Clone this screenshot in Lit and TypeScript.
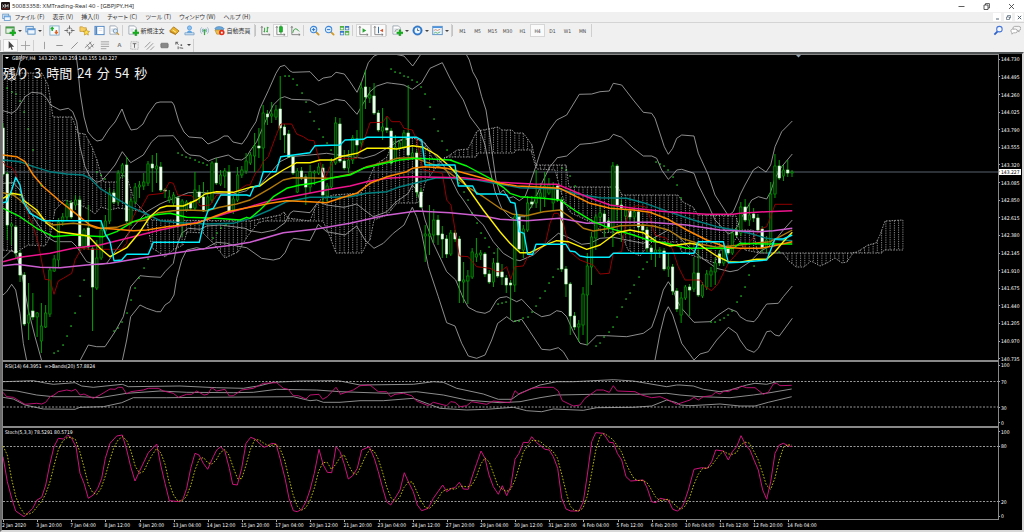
import { LitElement, html, svg, css, nothing } from "lit";
import { customElement, state } from "lit/decorators.js";
import { classMap } from "lit/directives/class-map.js";
import { styleMap } from "lit/directives/style-map.js";

type Point = [number, number];
type Tile = [number, number, string];

const FIRST_BAR = 3;
const BAR_STEP = 4.265;
const BAR_COUNT = 186;
const barX = (i: number) => FIRST_BAR + i * BAR_STEP;

/* Each tile holds an origin and points stored in thirds of a unit from it. */
const trace = (...tiles: Tile[]): Point[] =>
  tiles.flatMap(([ox, oy, text]) =>
    text
      .trim()
      .split(/\s+/)
      .map((pair) => {
        const [x, y] = pair.split(",").map(Number);
        return [ox + x / 3, oy + y / 3] as Point;
      })
  );

const points = (text: string): Point[] =>
  text.trim().split(/\s+/).map((pair) => pair.split(",").map(Number) as Point);

const join = (line: Point[]) =>
  line.map(([x, y]) => `${x.toFixed(1)},${y.toFixed(1)}`).join(" ");

const valueAt = (line: Point[], x: number): number => {
  if (x <= line[0][0]) return line[0][1];
  for (let i = 1; i < line.length; i++) {
    const [x0, y0] = line[i - 1];
    const [x1, y1] = line[i];
    if (x <= x1) return x1 === x0 ? y1 : y0 + ((y1 - y0) * (x - x0)) / (x1 - x0);
  }
  return line[line.length - 1][1];
};

/* Bollinger bands */
const BANDS: Point[][] = [
  points("3,72 8,79 12,81 16,76 19,66 22,54"),
  [
    ...points(
      "76,54 78,70 80,92 84,117 88,132 93,138 97,141 102,140 109,129 115,122 122,109 126,120 131,130 137,129 143,124 148,114 156,103 160,102 172,102 174,105 179,122 184,132 189,137 202,138 208,144 213,142 218,140 224,136 228,136 233,142 242,144 247,137"
    ),
    ...trace([250, 50, "0,243 18,215 30,175 55,122 78,70 90,50 104,46 120,63 128,67 180,65 206,93 220,84 244,80 258,67 283,72 300,95 321,127 335,95 355,38 372,18 387,12"]),
  ],
  trace([250, 50, "432,12 462,18 488,48 513,12"]),
  [
    ...trace([250, 50, "648,12 658,30 668,65 682,90 695,140 708,180 718,245 728,320 738,390 750,430"]),
    ...trace([500, 50, "10,420 25,445 40,440 58,452 75,440 85,415 109,345 120,310 145,245 170,210 200,195 238,133 275,132 300,125 328,123 340,100 365,105 400,150 430,187 455,190 465,205 493,290 505,313 518,295 530,265 545,255 582,258 595,310 625,375 645,435 685,497 700,485 715,450"]),
    ...trace([740, 50, "0,435 15,405 40,360 55,350 78,366 92,345 105,290 125,245 157,213"]),
  ],
  trace(
    [0, 50, "9,182 35,190 50,180 75,140 95,127 125,130 140,145 152,165 180,180 205,175 218,185 230,215 240,290 255,350 270,380 290,397 305,392 325,370 345,345 367,305 392,338 430,315 455,275 475,258 520,257 535,275 555,305 570,315 600,318 625,333 645,325 685,315 705,328 725,330 740,320"],
    [250, 50, "0,303 20,275 35,240 50,205 70,165 90,145 104,140 125,148 180,150 206,165 230,158 257,148 285,152 321,193 340,160 360,125 380,108 411,98 425,100 450,103 462,105 487,118 515,98 540,55 577,38 600,85 620,120 640,150 660,200 690,240 705,285 718,350 735,425"],
    [500, 50, "5,475 30,502 45,508 58,500 75,500 100,460 130,390 150,350 172,323 200,318 240,283 275,280 300,275 328,268 340,253 365,262 400,295 430,318 455,318 470,325 485,360 505,388 518,375 530,360 545,358 582,370 595,405 625,465 645,510 685,552 700,545 715,525"],
    [740, 50, "0,510 15,485 35,450 55,440 80,447 92,425 105,385 125,350 157,312"]
  ),
  trace(
    [0, 50, "9,400 40,398 60,420 80,465"],
    [0, 200, "105,60 140,110 165,125 215,125 230,140 260,185 290,195 320,190 345,155 400,80 440,35 480,12"],
    [0, 50, "495,455 530,442 565,428 600,427 640,430 700,432 740,422"],
    [250, 50, "0,412 30,405 60,370 90,335 120,320 180,315 230,310 250,313 300,320 340,325 375,315 411,295 450,270 490,262 520,275 550,310 580,345 600,380 625,430"],
    [250, 200, "640,0 670,45 700,75 730,125"],
    [500, 50, "10,610 40,628 60,632 100,615 140,580 175,550 200,560 245,583 270,580 300,565 340,562 380,570 430,580 460,565 505,540 530,555 560,585 600,620 650,655 690,665 715,660"],
    [740, 50, "0,655 30,635 60,605 85,590 110,565 130,540 157,510"]
  ),
  trace([0, 200, "9,175 35,150 50,165 65,220 85,330 105,410 125,482"]),
  trace(
    [0, 200, "240,482 265,435 290,440 315,440 345,395 370,350 392,260 420,227 450,230 482,232 495,215 520,190 530,140 545,100 565,85 600,88 620,78 660,75 700,80 735,85"],
    [250, 200, "0,92 35,98 75,90 105,68 120,40 130,33 180,38 205,5 230,15 282,22 320,12 340,28 370,50 411,35 435,8 475,-20 487,-45 500,-30 515,20 525,60 550,130 590,215 617,240 640,295 655,322 680,335 705,340 720,333 740,300"],
    [500, 50, "0,743 20,740 50,755 65,748 100,785 125,800 150,795 170,782 185,785 200,800 220,845 240,880 262,885 290,857 320,857 380,860 430,850 455,832 470,790 490,720 505,695 518,715 530,750 545,775 582,817 630,815 655,795 685,775 710,785"],
    [740, 50, "0,800 20,812 42,815 55,800 67,780 80,762 115,760 130,740 157,708"]
  ),
  trace([0, 200, "9,285 20,275 35,253 47,270 60,340 70,430 80,482"]),
  trace(
    [0, 200, "367,482 380,420 392,350 420,315 440,325 470,335 482,335 495,315 510,305 522,285 530,235 545,180 560,150 590,143 610,148 650,127 680,130 710,138 740,143"],
    [250, 200, "0,150 35,175 70,180 90,175 105,158 120,125 130,115 180,122 205,73 230,95 285,105 320,78 345,120 372,145 400,130 430,100 462,75 487,22 500,50 515,100 535,200 565,290 590,368 615,378 635,430 655,468 680,475 705,465 725,420 743,370"],
    [500, 50, "0,815 20,800 40,815 65,808 90,845 125,898 150,900 175,893 190,905 205,930"]
  ),
  trace(
    [500, 50, "465,930 480,850 495,790 505,770 518,795 545,880 582,930 600,912 625,905 650,870 685,832 710,850"],
    [740, 50, "0,870 20,898 42,907 55,895 80,845 92,843 105,855 118,858 157,805"]
  ),
];

const AVERAGES: { color: string; width: number; line: Point[] }[] = [
  {
    color: "#a40000",
    width: 0.9,
    line: trace(
      [0, 50, "9,335 20,350 35,352 47,370 60,410 70,440"],
      [0, 200, "75,20 100,80 115,130 135,238 150,240 162,283 175,243 190,235 215,220 225,180 245,145 270,148 365,148 380,130 390,70 410,30"],
      [0, 50, "420,480 445,435 490,430 508,397 520,400 533,435 575,437 600,468 630,465 650,435 690,435 740,405"],
      [250, 50, "0,405 15,372 30,355 40,335 55,320 75,265 92,222 125,222 140,252 160,260 175,270 192,272 205,320 225,385 240,350 257,325 321,325 335,290 360,218 398,217 411,198 425,215 450,215 462,235 487,240 500,270 510,320 520,360 577,370 590,450"],
      [250, 200, "603,15 628,168 655,170 680,200 720,205 740,215"],
      [500, 50, "0,665 20,650 32,688 45,650 70,648 83,620 135,585 150,520 162,490 175,490 190,520 210,605 240,630 280,645 300,672 328,670 340,610 365,605 375,530 390,475 410,467 435,470 445,485 465,555 500,565 518,600 535,650 555,690 600,690 615,710 635,722 655,700 685,640"],
      [740, 50, "0,600 30,575 65,535 80,530 92,500 105,463 157,463"]
    ),
  },
  {
    color: "#008080",
    width: 1.4,
    line: trace(
      [0, 50, "9,330 60,335 100,350 150,365 200,372 250,375 270,385 300,415 340,440"],
      [0, 200, "390,20 440,42 480,62 540,68 620,72 700,70"],
      [250, 50, "0,505 60,480 110,455 180,442 240,442 300,440 350,430 411,425 450,410 500,398 560,383 600,385 680,390"],
      [500, 50, "0,403 60,413 180,417 230,432 300,443 380,445 430,458 505,485 580,510 650,530"],
      [740, 50, "0,543 40,553 80,565 120,570 157,572"]
    ),
  },
  {
    color: "#b07a0c",
    width: 1.4,
    line: trace(
      [0, 50, "9,428 40,435 60,450"],
      [0, 200, "70,10 110,40 140,65 160,75 220,70 265,75 290,85 350,82 400,65 440,60 475,38 520,32 560,30 620,32 660,22 710,12"],
      [250, 50, "0,450 60,415 100,390 130,383 240,385 300,373 350,350 411,335 440,325 490,323 540,340 580,355 620,385 660,415 700,440"],
      [500, 50, "0,475 40,493 80,497 130,485 180,480 215,505 250,535 280,543 330,535 360,527 430,525 460,528 505,540 545,565 600,582 650,592"],
      [740, 50, "0,585 40,580 90,575 120,560 157,540"]
    ),
  },
  {
    color: "#cc5ed0",
    width: 1.5,
    line: trace(
      [0, 200, "9,197 50,193 120,202 180,203 260,195 330,190 420,175 520,160 600,148 700,135"],
      [250, 200, "0,127 100,98 200,87 300,70 400,47 500,33 600,38 700,48"],
      [500, 50, "0,508 80,512 180,505 260,520 340,517 450,517 560,525 660,540"],
      [740, 50, "0,543 60,545 100,542 157,535"]
    ),
  },
  {
    color: "#f0148e",
    width: 1.5,
    line: trace(
      [0, 200, "9,185 60,172 150,160 220,145 300,135 400,110 480,90 600,65 680,40"],
      [250, 50, "0,470 60,452 150,435 240,418 300,408 350,395 411,385 487,380 560,382 640,383"],
      [500, 50, "0,397 100,402 170,403 200,415 260,440 330,465 400,475 500,485 620,493 700,493"],
      [740, 50, "0,490 80,485 157,482"]
    ),
  },
  {
    color: "#00ff00",
    width: 1.4,
    line: trace(
      [0, 200, "9,25 60,50 110,85 160,110 220,105 310,110 350,95 400,65 460,45 510,40 560,52 650,55 720,60 740,52"],
      [250, 50, "0,505 30,480 70,440 110,415 150,405 190,400 240,385 300,375 340,355 411,338 450,330 500,325 600,330 650,348 720,385"],
      [500, 50, "10,412 30,430 60,440 130,445 180,450 230,485 280,515 330,535 400,555 450,572 500,580 560,595 620,595 700,595"],
      [740, 50, "0,580 80,582 157,582"]
    ),
  },
  {
    color: "#ff8800",
    width: 1.5,
    line: trace(
      [0, 50, "9,315 50,320 75,335 100,375 130,410 170,445"],
      [0, 200, "175,0 220,35 270,75 300,85 340,87 400,92 440,90 500,80 590,70 680,35"],
      [250, 50, "0,472 60,460 110,452 180,455 230,458 270,445 320,430 360,400 411,380 470,365 487,355 525,350 590,355 640,368 700,385"],
      [500, 50, "0,400 50,408 100,410 180,415 220,435 270,460 330,475 400,480 450,487 505,508 560,540 620,570 680,592"],
      [740, 50, "0,595 60,595 100,588 157,575"]
    ),
  },
  {
    color: "#fff200",
    width: 1.4,
    line: trace(
      [0, 50, "9,445 35,430 65,435"],
      [0, 200, "70,0 110,30 140,70 175,95 230,103 265,108 300,145 330,170 380,143 420,95 450,50 480,24"],
      [0, 50, "500,468 550,468 590,450 615,432 650,425 700,427 740,415"],
      [250, 50, "0,412 30,408 60,385 100,360 140,338 180,338 210,330 250,330 270,320 321,310 350,295 411,295 440,297 487,287 520,292 560,315 600,350 640,395 700,480"],
      [500, 50, "0,545 30,580 60,608 90,608 140,583 170,572 205,575 260,598 300,585 350,548 390,540 430,548 470,575 510,588 570,580 600,585 650,618 685,635"],
      [740, 50, "0,637 50,628 80,628 105,605 130,575 157,547"]
    ),
  },
  {
    color: "#00f0ff",
    width: 1.4,
    line: trace(
      [0, 50, "9,458 20,455 35,420 47,382 60,405 68,450"],
      [0, 200, "75,15 90,40 130,62 303,62 315,100 330,125 342,182 365,180 380,163 445,163 460,127 598,127 612,65 625,30 640,25"],
      [0, 50, "662,435 740,435"],
      [250, 50, "0,438 12,410 27,408 40,365 78,365 92,320 180,308 195,287 270,285 285,270 340,268 350,262 500,262 515,270 525,345 615,345 625,408 668,408 680,432"],
      [500, 50, "0,432 20,435 32,457 45,460 58,545 72,550 83,613 98,613 108,583 198,583 210,603 225,605 240,618 260,622 328,622 340,610 582,610 595,575 670,575 685,638"],
      [740, 50, "0,637 55,632 80,630 92,600 105,567 130,567 157,555"]
    ),
  },
];

/* Ichimoku cloud spans */
const SPAN_A = points(
  "3,75 12,77 20,73 42,73 48,85 53,117 72,117 78,133 85,134 92,147 97,160 101,175 104,182 118,182 122,175 127,177 132,193 136,203 145,212 152,220 250,221 280,215 284,212 288,218 310,221 315,208 320,200 333,195 361,193 367,183 375,165 387,157 393,142 413,138 425,143 432,158 440,162 447,157 457,150 468,149 477,131 483,130 498,127 502,130 512,130 515,133 523,133 527,138 532,145 536,165 566,165 569,187 618,187 622,195 678,195 683,202 693,207 698,215 736,216 740,230 753,230 757,250 760,253 850,253 857,252 868,245 876,243 880,235 885,221 903,220"
);
const SPAN_B = points(
  "3,250 17,252 28,245 45,246 50,237 55,210 65,200 80,205 90,210 95,214 101,207 110,210 118,208 132,210 145,212 152,248 160,253 165,257 173,250 183,245 187,232 203,233 213,243 225,258 238,252 247,237 258,223 264,221 323,221 330,237 336,253 362,253 367,243 370,240 374,220 387,215 397,203 417,203 421,200 425,183 432,173 438,165 445,157 476,157 478,153 514,153 516,150 531,150 535,165 537,169 555,170 562,195 566,205 571,213 580,217 592,223 603,233 613,232 622,235 628,250 640,256 647,247 652,242 677,242 682,252 700,258 715,263 720,250 728,250 737,237 745,250 760,253 783,253 788,260 796,267 804,267 811,261 820,266 827,263 835,258 842,263 847,262 853,253 882,253 884,250 903,250"
);

const SAR = points(
  "7,88 12,92 16,94 20,101 24,112 28,129 33,150 41,185 54,353 58,351 63,345 67,336 71,326 75,313 80,296 84,280 97,172 101,175 105,179 114,331 118,328 122,322 127,313 131,300 135,288 139,278 144,268 148,259 178,153 182,155 186,157 190,158 195,160 199,162 203,163 207,165 213,238 217,233 221,228 226,225 285,76 289,76 293,79 297,85 302,93 306,102 310,112 314,121 319,129 323,137 327,143 331,150 391,69 395,72 400,73 404,76 408,77 412,80 417,82 421,87 425,94 430,107 434,119 438,131 442,141 447,150 451,160 455,170 459,183 464,192 468,200 472,213 477,223 481,233 485,238 489,247 494,253 498,304 502,303 506,302 515,321 519,321 523,318 528,317 532,312 536,306 540,298 545,291 549,283 553,277 558,269 562,168 566,170 570,176 575,186 596,346 600,343 604,337 609,332 613,327 617,317 622,307 626,299 630,293 634,285 639,277 643,269 647,262 656,162 660,164 664,166 668,170 673,177 677,185 681,198 711,322 715,322 720,320 724,318 728,315 732,311 737,302 741,296 745,287 749,275 754,266 779,252"
);

/* One candle per bar: high, low, body top, body bottom; "-" marks a falling bar. */
const CANDLES = `
123,176,128,174- 172,240,174,225- 222,245,224,226 225,258,227,253- 250,282,253,275- 272,326,275,324- 283,340,315,323 293,320,311,317-
312,337,313,317 303,353,326,341 305,328,313,327 267,317,270,314 255,272,259,271 218,268,222,260 213,226,217,222 200,220,204,217
200,219,203,217- 195,210,200,205 196,250,200,246- 228,250,230,247 205,250,228,247- 246,331,249,287- 240,290,258,288 220,260,230,258
215,234,221,231 188,224,193,221 190,204,193,202- 170,205,173,202 163,178,165,173 157,223,165,221- 198,226,201,222 183,204,187,202
181,198,185,187 173,190,182,186 161,186,164,183 155,192,164,168- 153,183,166,169 162,192,167,190- 188,198,190,191- 190,203,197,200
192,206,195,203 196,228,198,226- 199,237,201,226 200,212,202,210 201,210,203,208- 172,210,190,208 185,203,192,197- 182,212,197,211-
190,212,197,211 161,203,163,200 158,185,163,183- 170,186,175,184 168,188,171,176 165,213,172,211- 196,214,199,211 167,202,175,200
166,178,170,175 153,174,161,171 152,165,155,163 133,172,146,156 128,158,146,148- 105,172,113,148 110,125,114,117- 102,123,114,116
105,120,110,117 76,140,109,128- 124,153,127,135- 130,158,134,157- 155,175,157,173- 168,193,171,192 167,180,171,178- 174,205,177,187-
165,193,172,187 170,185,172,173 163,175,167,173 164,202,168,195- 183,202,186,196 158,190,162,187 117,165,123,163 118,163,124,161-
150,170,161,168- 150,173,160,168 135,164,138,160 130,158,139,145- 82,147,88,143 70,109,87,97- 87,103,95,98 83,115,96,113-
110,132,113,130- 108,140,127,131 117,133,128,130- 128,165,131,163- 135,162,147,160 140,150,143,148 130,149,133,147 85,158,133,155-
148,160,153,157 150,197,153,192- 188,208,192,207- 225,262,234,236 205,255,234,236 209,243,220,235 215,245,220,235- 226,258,234,239-
235,258,239,254- 230,256,233,254 230,242,233,239- 236,303,239,281- 262,303,280,282 270,304,276,281 248,279,252,277 238,262,254,257
250,260,253,255 252,277,254,274- 270,284,274,282- 258,287,263,282 248,278,263,276- 264,285,272,277- 275,293,278,285- 280,320,283,285-
214,292,217,285 214,252,217,249- 225,258,229,250 196,232,203,230 196,208,202,204- 170,208,196,203 183,213,193,197 172,207,186,197
178,195,185,193 182,210,187,203 184,202,186,200- 197,272,200,269- 266,297,269,284- 282,335,284,316- 312,330,316,327- 320,342,324,327
287,335,294,325 253,345,266,295 232,285,237,267 214,250,217,238 206,225,213,217 210,237,214,222- 218,232,221,227- 162,247,166,227
164,220,166,205- 200,242,205,208- 208,220,210,216 208,220,211,217- 208,222,212,217 210,230,212,227- 222,234,226,230- 227,252,230,248-
245,260,248,252- 237,267,250,253 247,258,250,251 248,271,251,269- 253,277,267,269 264,295,267,291- 288,312,291,309- 292,323,298,315
285,300,287,298 284,316,287,290- 257,292,273,289 250,297,273,295- 282,298,285,296 270,290,274,287 267,287,271,275 258,285,263,272
250,266,254,263- 245,266,249,263 245,255,249,253- 228,255,233,253 227,237,230,235- 202,236,207,233 199,222,207,220- 203,226,215,220
208,222,214,218- 214,232,218,230- 226,253,229,248- 236,253,240,248 182,244,194,242 154,198,166,194 160,180,166,178- 165,181,170,176
160,177,170,173- 170,177,172,173
`
  .trim()
  .split(/\s+/)
  .map((entry) => {
    const [high, low, top, bottom] = entry.replace("-", "").split(",").map(Number);
    return { high, low, top, bottom, falling: entry.endsWith("-") };
  });

/* RSI(14) and its bands */
const RSI = trace(
  [0, 355, "9,112 20,125 40,127 75,148 110,145 125,147 137,142 150,125 162,120 175,110 200,105 215,108 227,103 240,120 252,117 280,130 300,120 330,102 345,103 355,97 367,97 380,117 392,110 430,105 445,100 475,100 490,108 520,115 535,127 560,118 575,118 590,108 612,120 623,118 635,98 650,108 675,103 688,123 700,122 725,105 760,100 790,85 830,83 850,100 865,103 880,122 895,122 918,132 930,120 957,118 968,133 982,125 1008,97 1020,115"],
  [340, 355, "0,118 40,105 60,92 90,90 115,110 140,110 152,125 165,118 190,115 215,122 230,138 265,152 280,142 320,152 332,140 345,142 360,155 380,152 395,140 440,148 460,138 510,143 525,107 537,118 575,100 600,97 640,97 655,108 667,137 700,153 720,150 735,130 770,105 790,105 808,112 820,92 832,108 885,110 905,120 935,128 960,125 985,135 1010,148"],
  [680, 355, "0,145 30,135 42,127 55,135 70,125 95,122 107,112 120,117 132,108 145,110 160,102 172,103 183,93 200,98 225,98 250,118 265,112 280,87 290,85 300,92 335,91"]
);
const RSI_BANDS = [
  trace(
    [0, 355, "9,80 100,77 140,85 160,88 225,83 245,93 280,97 367,88 385,95 540,93 650,98 730,100 780,92 820,82 900,78 1000,77"],
    [340, 355, "0,78 60,90 220,88 280,80 310,82 350,100 430,117 475,133 515,133 540,115 600,90 650,80 700,80 820,74 880,78 920,85 980,95 1010,90"],
    [680, 355, "0,90 40,93 70,103 120,110 150,105 200,90 225,85 260,88 290,80 335,79"]
  ),
  trace(
    [0, 355, "9,105 50,108 110,120 160,125 240,125 300,128 380,115 480,108 560,112 700,113 760,112 830,103 950,105"],
    [340, 355, "0,110 140,115 230,110 310,120 380,135 480,143 540,140 600,128 650,120 760,118 900,118 980,115"],
    [680, 355, "0,120 60,125 150,128 220,120 270,113 335,102"]
  ),
  trace(
    [0, 355, "9,127 40,132 75,150 130,162 225,163 240,157 310,155 365,143 400,128 500,128 620,127 880,125 930,137 950,135 970,142"],
    [340, 355, "0,142 60,137 130,137 220,130 260,145 300,160 380,165 440,163 520,157 560,167 605,170 640,162 730,166 770,158 880,157 935,153 980,135 1010,143"],
    [680, 355, "0,150 30,152 120,147 180,153 225,153 265,142 335,125"]
  ),
];

/* Stochastic(5,3,3) */
const STOCH = trace(
  [0, 355, "9,305 22,380 35,430 47,468 72,485 98,460 111,435 125,427 137,390 150,325 162,275 175,250 190,252 203,240 214,248 228,275 240,355 252,385 265,430 280,420 293,400 305,370 316,310 330,265 350,243 367,240 380,285 392,335 405,378 418,350 445,293 470,267 482,330 495,385 508,437 540,440 550,430 560,400 572,340 585,295 597,300 610,325 623,343 640,305 650,285 662,275 675,290 688,340 698,388 712,390 725,340 738,265 752,247 765,252 778,265 792,277 805,272 815,265 828,267 840,310 855,370 867,430 880,467 892,470 905,463 918,440 930,405 943,355 957,283 970,330 982,352 995,353 1008,275"],
  [340, 355, "0,290 12,325 25,372 38,362 52,340 65,285 88,275 103,310 115,350 128,400 140,440 152,450 165,430 180,405 193,353 205,380 220,410 232,450 245,467 265,460 280,430 308,390 320,410 335,400 345,398 358,382 370,402 385,403 398,360 410,325 423,288 435,310 447,360 460,395 475,418 487,392 500,422 512,395 525,313 537,295 550,262 565,263 575,245 590,263 615,283 628,285 640,305 653,340 665,430 678,462 692,468 717,468 730,440 742,360 755,260 767,233 790,235 808,262 820,263 832,295 845,315 858,365 872,378 910,375 922,400 935,440 948,443 960,430 985,435 998,463 1012,468"],
  [680, 355, "0,463 10,450 25,405 42,343 65,338 82,340 95,320 107,285 130,288 145,315 157,290 170,275 183,242 197,270 210,285 222,315 235,345 248,405 260,433 272,380 285,295 298,270 310,265 325,272 335,275"]
);
const STOCH_SIGNAL: Point[] = Array.from({ length: BAR_COUNT }, (_, i) => {
  const x = barX(i);
  if (i < 2) return [x, 446 + i * 9];
  const sum = [0, 1, 2].reduce((total, back) => total + valueAt(STOCH, x - back * BAR_STEP), 0);
  return [x, sum / 3];
});

const PRICES = Array.from({ length: 18 }, (_, i) => 144.73 - i * 0.235);
const DATES =
  "2 Jan 2020|3 Jan 20:00|7 Jan 04:00|8 Jan 12:00|9 Jan 20:00|13 Jan 04:00|14 Jan 12:00|15 Jan 20:00|17 Jan 04:00|20 Jan 12:00|21 Jan 20:00|23 Jan 04:00|24 Jan 12:00|27 Jan 20:00|29 Jan 04:00|30 Jan 12:00|31 Jan 20:00|4 Feb 04:00|5 Feb 12:00|6 Feb 20:00|10 Feb 04:00|11 Feb 12:00|12 Feb 20:00|14 Feb 04:00".split(
    "|"
  );

const cloudHatch = Array.from({ length: 212 }, (_, i) => barX(i))
  .filter((x) => x <= 904)
  .map((x) => `M${x.toFixed(1)} ${valueAt(SPAN_A, x).toFixed(1)}V${valueAt(SPAN_B, x).toFixed(1)}`)
  .join("");

const plus = svg`<path d="M7.600 5.200h2v2.300h2.300v2H9.600v2.300h-2v-2.300H5.300v-2h2.300z" fill="#12b51c" stroke="#0a7d12" stroke-width=".4"/>`;
const sheet = svg`<path d="M1 1h6l2 2v7H1z" fill="#fff" stroke="#8794a3" stroke-width=".8"/><path d="M2.500 4.500h4M2.500 6.500h3" stroke="#9fb1c4" stroke-width=".7"/>`;
const axes = svg`<path d="M2 1.500V10.500H11M1 3l1-1.500L3 3M9.500 9.500l1.500 1-1.500 1" fill="none" stroke="#777" stroke-width=".9"/>`;
const magnifier = svg`<path d="M7.500 7.500l3 3" stroke="#d19a2a" stroke-width="2" stroke-linecap="round"/><circle cx="5" cy="5" r="3.500" fill="#dbeeff" stroke="#3d86d8" stroke-width="1.100"/>`;

const ICONS: Record<string, unknown> = {
  newChart: svg`<rect x="1" y="2" width="9" height="7" fill="#e6f4e6" stroke="#4a8c4a" stroke-width=".9"/><path d="M1 3h9" stroke="#3f9b45" stroke-width="1.500"/>${plus}`,
  profiles: svg`<rect x="1" y="1.500" width="8" height="6" fill="#dcebf9" stroke="#5a8fc2"/><rect x="3" y="4" width="8" height="6" fill="#eef6ff" stroke="#5a8fc2"/><path d="M3 5h8" stroke="#5a9be0" stroke-width="1.300"/>`,
  market: svg`<rect x="1" y="1" width="10" height="10" fill="#f4fbff" stroke="#7ba6c9" stroke-width=".9"/><path d="M3.500 6.500V3M2 4.500 3.500 2.700 5 4.500" stroke="#1fae2a" stroke-width="1.600" fill="none"/><path d="M8 5.500V9M6.500 7.500 8 9.300l1.500-1.800" stroke="#e06420" stroke-width="1.600" fill="none"/>`,
  crosshair: svg`<circle cx="6" cy="6" r="3" fill="none" stroke="#777" stroke-width=".9"/><path d="M6 .5v4M6 7.500v4M.5 6h4M7.500 6h4" stroke="#666" stroke-width="1"/>`,
  navigator: svg`<path d="M1 2h3l1 1h3v4H1z" fill="#f6cf62" stroke="#c08b1d" stroke-width=".7"/><path d="m8 4.500 1 2.200 2.500.3-1.800 1.600.5 2.400L8 9.800 5.800 11l.5-2.400L4.500 7 7 6.700z" fill="#ffe04a" stroke="#b8891b" stroke-width=".7"/>`,
  terminal: svg`<rect x="1" y="1.500" width="10" height="9" fill="#fff" stroke="#4d86c4"/><path d="M2.500 2v8" stroke="#4d86c4" stroke-width="2"/><path d="M5 4h4M5 6h4" stroke="#ccd" stroke-width=".6"/>`,
  tester: svg`${sheet}<circle cx="7" cy="6.500" r="2.300" fill="#d9ecfb" stroke="#7d98b3"/><path d="m8.500 8.200 2.300 2.600" stroke="#c99a3a" stroke-width="1.500"/>`,
  order: svg`${sheet}${plus}`,
  editor: svg`<path d="M.8 6.500 5 2l6 4.500L7.500 10z" fill="#e9b228" stroke="#9d6b10" stroke-width=".8"/><path d="M.8 6.500 7.500 10v1.200L.8 7.800z" fill="#b87c12"/><path d="m4 5.500 3.500 2.300" stroke="#fff1b0"/>`,
  options: svg`<circle cx="6" cy="3.200" r="2.300" fill="#8bc4f4" stroke="#4b8fd0" stroke-width=".7"/><path d="M3 9c0-4 6-4 6 0z" fill="#5aa6ea"/><path d="M1 8.500h10v2.200H1z" fill="#dceaf6" stroke="#6595c2" stroke-width=".8"/>`,
  signals: svg`<path d="M3 2.500a5 5 0 0 0 0 7M9 2.500a5 5 0 0 1 0 7" stroke="#9db6c9" fill="none"/><path d="M4.500 4a3 3 0 0 0 0 4M7.500 4a3 3 0 0 1 0 4" stroke="#5e93b8" fill="none"/><circle cx="6" cy="6" r="1.300" fill="#35a73d"/><path d="M6 7v4" stroke="#35a73d" stroke-width="1.300"/>`,
  auto: svg`<path d="M1 4c1-3 8-3 10 0L9.500 6h-7z" fill="#69a8dc" stroke="#3c78ad" stroke-width=".6"/><path d="M1 5.500h8.500L8 10H3z" fill="#ecc04c" stroke="#b18320" stroke-width=".6"/><circle cx="8.500" cy="8.300" r="3" fill="#e02d1b"/><rect x="7.500" y="7.300" width="2" height="2" fill="#fff"/>`,
  bars: svg`${axes}<path d="M5 3v5M5 7H3.800M8 2v6M8 3h1.500M8 7H6.800" stroke="#2c9a35" stroke-width="1"/>`,
  candles: svg`${axes}<path d="M6.500 .5v9" stroke="#168a20"/><rect x="5" y="2" width="3" height="5.500" fill="#19b827" stroke="#168a20" stroke-width=".7"/>`,
  line: svg`${axes}<path d="M3 8.500C4.500 3 6.500 3 10 7" stroke="#2c9a35" fill="none"/>`,
  zoomIn: svg`${magnifier}<path d="M5 3.200v3.600M3.200 5h3.600" stroke="#2b70c4" stroke-width="1"/>`,
  zoomOut: svg`${magnifier}<path d="M3.200 5h3.600" stroke="#2b70c4" stroke-width="1"/>`,
  tile: svg`<path d="M1 1h4.600v4.600H1zM6.500 6.500h4.600v4.600H6.500z" fill="#4caf3c"/><path d="M6.500 1h4.600v4.600H6.500zM1 6.500h4.600v4.600H1z" fill="#3a74c8"/><path d="M1.800 3h3v1.800h-3zM7.300 3h3v1.800h-3zM1.800 8.500h3v1.800h-3zM7.300 8.500h3v1.800h-3z" fill="#e6f0ea"/>`,
  scroll: svg`${axes}<path d="M5 3.500v5l4-2.500z" fill="#27a532"/>`,
  shift: svg`${axes}<path d="M6 2v7" stroke="#2c6fb5" stroke-width="1.100"/><path d="M11 4 7.500 6 11 8z" fill="#d8542a"/>`,
  indicators: svg`${sheet}<path d="M3 8c2-6 2 0 4-4" stroke="#888" fill="none" stroke-width=".8"/>${plus}`,
  periods: svg`<circle cx="6" cy="6" r="5" fill="#2f7fd6" stroke="#1d5ca6" stroke-width=".7"/><circle cx="6" cy="6" r="3.200" fill="#eef6ff"/><path d="M6 3.800V6h2" stroke="#345" stroke-width=".8" fill="none"/>`,
  templates: svg`<rect x=".8" y="1.500" width="10.400" height="9" fill="#e9f3fc" stroke="#5b8fc4"/><path d="M1 2.500h10" stroke="#4b93e0" stroke-width="1.600"/><path d="m2 6 2-1 2 1 3-1.500" stroke="#d07a4a" fill="none" stroke-width=".8"/><path d="m2 9 2-1 2 1 3-1.500" stroke="#3aa050" fill="none" stroke-width=".8"/>`,
  search: svg`<path d="M5 7 1.500 10.500" stroke="#2f62c8" stroke-width="2"/><circle cx="7" cy="4.500" r="3" fill="#f6f9ff" stroke="#4273d6" stroke-width="1.100"/>`,
  chat: svg`<path d="M5 1.500h4.500a2 2 0 0 1 0 4.500l.5 1.500L8 6H6a2.200 2.200 0 0 1-1-4.500z" fill="#f4f4f4" stroke="#888" stroke-width=".7"/><path d="M2.500 4.500H6a2 2 0 0 1 0 4H4L2 10l.2-1.700a2 2 0 0 1 .3-3.800z" fill="#fff" stroke="#888" stroke-width=".7"/>`,
  cursor: svg`<path d="M4 1v8.500l2-1.800L7.300 11l1.300-.6-1.400-3H10z" fill="#444"/>`,
  cross: svg`<path d="M6 1v10M1 6h10" stroke="#999" stroke-width=".9"/>`,
  vline: svg`<path d="M6 2v8" stroke="#999"/>`,
  hline: svg`<path d="M2.500 6h7" stroke="#888"/>`,
  trend: svg`<path d="M2.500 9.500l7-7" stroke="#888"/>`,
  channel: svg`<path d="M1 8.500 8 2M4 10.500l7-6M3 5l4 5M6 2l4 6" stroke="#777" stroke-width=".9"/>`,
  fibo: svg`<path d="M2 2h9M2 4.500h9M2 7h9M2 9.500h6" stroke="#888" stroke-width=".8"/>`,
  label: svg`<rect x="2" y="2" width="8" height="8" fill="none" stroke="#999" stroke-dasharray="1 1"/><path d="M4 4h4M6 4v4.500" stroke="#666"/>`,
  pitch: svg`<path d="M1 8l6-6M3 10.500l7-7M7 11l4-4" stroke="#888" stroke-width=".9"/>`,
  shape: svg`<rect x="2" y="3.500" width="8" height="5" rx="1" fill="#888" stroke="#666" stroke-width=".7"/>`,
  arrows: svg`<path d="M2 2.500 5 5M2 5V2.500h2.500M6 8.500l4 .5M4.500 7v3" stroke="#555" fill="none"/><circle cx="8" cy="5.500" r="1" fill="#555"/>`,
};

const icon = (name: string) => html`<svg class="icon" viewBox="0 0 12 12" aria-hidden="true">${ICONS[name]}</svg>`;

type Tool = { id: string; name: string; drop?: boolean; text?: string; glyph?: string } | "sep";

const STANDARD: Tool[] = [
  { id: "newChart", name: "新規チャート", drop: true },
  { id: "profiles", name: "組表示", drop: true },
  "sep",
  { id: "market", name: "気配値表示" },
  { id: "crosshair", name: "データウィンドウ" },
  { id: "navigator", name: "ナビゲーター" },
  { id: "terminal", name: "ターミナル" },
  { id: "tester", name: "ストラテジーテスター" },
  "sep",
  { id: "order", name: "新規注文", text: "新規注文" },
  { id: "editor", name: "メタエディター" },
  { id: "options", name: "コミュニティ" },
  { id: "signals", name: "シグナル" },
  { id: "auto", name: "自動売買", text: "自動売買" },
];
const CHARTING: Tool[] = [
  { id: "bars", name: "バーチャート" },
  { id: "candles", name: "ローソク足" },
  { id: "line", name: "ラインチャート" },
  "sep",
  { id: "zoomIn", name: "拡大" },
  { id: "zoomOut", name: "縮小" },
  { id: "tile", name: "整列" },
  "sep",
  { id: "scroll", name: "自動スクロール" },
  { id: "shift", name: "チャートシフト" },
  "sep",
  { id: "indicators", name: "インディケータ", drop: true },
  { id: "periods", name: "時間足", drop: true },
  { id: "templates", name: "定型チャート", drop: true },
];
const DRAWING: Tool[] = [
  { id: "cursor", name: "カーソル" },
  { id: "cross", name: "クロスヘア" },
  "sep",
  { id: "vline", name: "垂直線" },
  { id: "hline", name: "水平線" },
  { id: "trend", name: "トレンドライン" },
  { id: "channel", name: "チャネル" },
  { id: "fibo", name: "フィボナッチ" },
  { id: "text", name: "テキスト", glyph: "A" },
  { id: "label", name: "ラベル" },
  { id: "pitch", name: "ピッチフォーク" },
  { id: "shape", name: "図形" },
  { id: "arrows", name: "矢印", drop: true },
];
const MENUS = ["ファイル (F)", "表示 (V)", "挿入(I)", "チャート (C)", "ツール (T)", "ウィンドウ (W)", "ヘルプ (H)"];
const FRAMES = ["M1", "M5", "M15", "M30", "H1", "H4", "D1", "W1", "MN"];

@customElement("app-root")
export class AppRoot extends LitElement {
  @state() private frame = "H4";
  @state() private pressed = new Set(["candles", "scroll", "shift", "cursor"]);

  static styles = css`
    :host {
      display: flex;
      flex-direction: column;
      height: 100vh;
      background: #f0f0f0;
      color: #333;
      font: 6px/8px "Noto Sans", "Noto Sans CJK JP", sans-serif;
    }
    * {
      box-sizing: border-box;
    }
    button {
      all: unset;
      box-sizing: border-box;
      display: flex;
      align-items: center;
      justify-content: center;
    }
    .titlebar {
      display: flex;
      align-items: center;
      height: 12px;
      padding-left: 1px;
      background: #fff;
    }
    .logo {
      width: 9px;
      height: 8px;
      margin-right: 2px;
    }
    h1 {
      margin: 0;
      font-size: 6px;
      font-weight: 400;
      white-space: nowrap;
    }
    .window-buttons {
      display: flex;
      margin-left: auto;
    }
    .window-buttons button {
      width: 25px;
      height: 12px;
    }
    .window-buttons svg {
      width: 7px;
      height: 7px;
    }
    .menubar {
      display: flex;
      align-items: center;
      height: 11px;
      border-bottom: 1px solid #d4d4d4;
    }
    .menu-icon {
      width: 9px;
      height: 9px;
      margin: 0 4px 0 2px;
    }
    .menus {
      display: flex;
      gap: 8px;
      font-family: "Noto Sans CJK JP", sans-serif;
      font-feature-settings: "palt";
    }
    .child-buttons {
      display: flex;
      gap: 3px;
      margin-left: auto;
      padding-right: 1px;
    }
    .child-buttons button {
      width: 8px;
      height: 8px;
      background: #fff;
    }
    .child-buttons svg {
      width: 5px;
      height: 5px;
    }
    .toolbar {
      display: flex;
      height: 15px;
      align-items: center;
    }
    .toolbar.drawing {
      height: 14px;
    }
    .group {
      display: flex;
      align-items: center;
      height: 13px;
      padding-right: 1px;
      border-right: 1px solid #cfcfcf;
    }
    .grip {
      width: 3px;
      height: 11px;
      border-left: 1px solid #c4c4c4;
    }
    .sep {
      width: 4px;
      height: 11px;
      border-left: 1px solid #cfcfcf;
    }
    .tool {
      width: 15px;
      height: 13px;
    }
    .tool.drop {
      width: 20px;
      gap: 2px;
    }
    .tool.wide {
      width: 41px;
      gap: 1px;
      font-family: "Noto Sans CJK JP", sans-serif;
      white-space: nowrap;
    }
    .tool.on {
      background: #fafafa;
      border: 1px solid #d6d6d6;
    }
    .tool.period {
      font: 5px/8px "DejaVu Sans Condensed", "DejaVu Sans", sans-serif;
      color: #444;
    }
    .tool.glyph {
      font: 700 6px/8px "Liberation Sans", sans-serif;
      color: #777;
    }
    .icon {
      width: 11px;
      height: 11px;
      flex: none;
    }
    .caret {
      border: 2px solid transparent;
      border-top-color: #444;
      border-bottom: 0;
    }
    .caption .caret {
      border-top-color: #fff;
    }
    .tools-right {
      display: flex;
      gap: 2px;
      margin-left: auto;
      padding-right: 1px;
    }
    .workspace {
      flex: 1;
      min-height: 0;
      display: grid;
      grid-template-rows: minmax(0, 308fr) minmax(0, 66fr) minmax(0, 92fr) 10px;
      border: 2px solid #6a6a6a;
      border-top-color: #505454;
      border-right-color: #d8d8d8;
      border-bottom-color: #d8d8d8;
      background: #000;
      color: #fff;
      font: 5px/6px "DejaVu Sans Condensed", "DejaVu Sans", sans-serif;
      white-space: nowrap;
    }
    .panel {
      display: grid;
      grid-template-columns: minmax(0, 1fr) 23px;
      min-height: 0;
    }
    .plot {
      position: relative;
      min-height: 0;
      border: 1px solid #888;
      border-top: 0;
      border-bottom-width: 2px;
      overflow: hidden;
    }
    .panel.main .plot {
      border-top: 1px solid #888;
    }
    .panel.last .plot {
      border-bottom-width: 1px;
    }
    .plot > svg {
      display: block;
      width: 100%;
      height: 100%;
    }
    .caption {
      position: absolute;
      top: 1px;
      left: 2px;
      display: flex;
      align-items: center;
      gap: 3px;
    }
    .main .caption {
      top: 0;
    }
    .countdown {
      position: absolute;
      top: 8px;
      left: 0;
      display: flex;
      gap: 5px;
      font: 13px/20px "Noto Sans CJK JP", sans-serif;
      color: #f2f2f2;
    }
    .axis {
      position: relative;
    }
    .tick {
      position: absolute;
      left: 0;
      right: 1px;
      display: flex;
      align-items: center;
      gap: 1px;
      transform: translateY(-50%);
    }
    .tick::before {
      content: "";
      width: 1px;
      height: 1px;
      background: #aaa;
    }
    .tick.current {
      background: #fff;
      color: #000;
    }
    .dates {
      display: flex;
      padding: 0 23px 0 0;
    }
    .date {
      flex: 0 0 3.425%;
      overflow: visible;
      padding-top: 2px;
      background: linear-gradient(#aaa, #aaa) 1px 0 / 1px 2px no-repeat;
    }
  `;

  private toggle(id: string) {
    const next = new Set(this.pressed);
    next.has(id) ? next.delete(id) : next.add(id);
    this.pressed = next;
  }

  private tools(list: Tool[]) {
    return list.map((tool) =>
      tool === "sep"
        ? html`<span class="sep"></span>`
        : html`<button
            class=${classMap({
              tool: true,
              drop: !!tool.drop,
              wide: !!tool.text,
              glyph: !!tool.glyph,
              on: this.pressed.has(tool.id),
            })}
            aria-label=${tool.name}
            @click=${() => this.toggle(tool.id)}
          >
            ${tool.glyph ?? icon(tool.id)}${tool.text ? html`<span>${tool.text}</span>` : nothing}${tool.drop
              ? html`<span class="caret"></span>`
              : nothing}
          </button>`
    );
  }

  private polyline(line: Point[], color: string, width: number, dash = "none") {
    return svg`<polyline points=${join(line)} fill="none" stroke=${color} stroke-width=${width} stroke-dasharray=${dash} stroke-linejoin="round"/>`;
  }

  private level(y: number) {
    return svg`<line x1="3" x2="998" y1=${y} y2=${y} stroke="#999" stroke-width="1" stroke-dasharray="2 1.500"/>`;
  }

  private candle(i: number) {
    const c = CANDLES[i];
    const x = barX(i);
    return svg`<line x1=${x} x2=${x} y1=${c.high} y2=${c.low} stroke="#00b400" stroke-width=".9"/>
      <rect x=${x - 1.2} y=${c.top} width="2.400" height=${Math.max(1, c.bottom - c.top)}
        fill=${c.falling ? "#ffffff" : "#003000"} stroke=${c.falling ? "#9dff9d" : "#00a800"} stroke-width=".6"/>`;
  }

  private tick(text: string, percent: number, current = false) {
    return html`<span class=${classMap({ tick: true, current })} style=${styleMap({ top: `${percent}%` })}>${text}</span>`;
  }

  render() {
    const priceTop = (price: number) => 1.72 + ((144.73 - price) / 3.995) * 97.2;
    return html`
      <header class="titlebar">
        <svg class="logo" viewBox="0 0 9 8" aria-hidden="true">
          <rect width="9" height="8" rx="1" fill="#1c1414" />
          <path d="M1.500 2.500l2 3m0-3l-2 3M4.500 5.500v-3l1.300 2 1.300-2v3" stroke="#ddd" stroke-width=".8" fill="none" />
          <path d="M1 6.800h7" stroke="#b03030" stroke-width=".6" />
        </svg>
        <h1>50083358: XMTrading-Real 40 - [GBPJPY,H4]</h1>
        <div class="window-buttons">
          <button aria-label="最小化"><svg viewBox="0 0 7 7"><path d="M.5 3.500h6" stroke="#333" stroke-width=".8" /></svg></button>
          <button aria-label="元に戻す">
            <svg viewBox="0 0 7 7"><path d="M1 2h4v4.500H1zM2.500 2V.6H6.400V5H5" fill="none" stroke="#333" stroke-width=".8" /></svg>
          </button>
          <button aria-label="閉じる"><svg viewBox="0 0 7 7"><path d="M1 1l5 5M6 1 1 6" stroke="#333" stroke-width=".8" /></svg></button>
        </div>
      </header>

      <nav class="menubar">
        <svg class="menu-icon" viewBox="0 0 12 12" aria-hidden="true">${ICONS.profiles}</svg>
        <div class="menus">${MENUS.map((menu) => html`<button>${menu}</button>`)}</div>
        <div class="child-buttons">
          <button aria-label="チャート最小化"><svg viewBox="0 0 5 5"><path d="M1 4h3" stroke="#567" /></svg></button>
          <button aria-label="チャートを元に戻す">
            <svg viewBox="0 0 5 5"><path d="M.5 2h3v2.500h-3zM1.500 2V.5h3v2.500h-1" fill="none" stroke="#567" stroke-width=".7" /></svg>
          </button>
          <button aria-label="チャートを閉じる"><svg viewBox="0 0 5 5"><path d="M.8.8l3.400 3.400M4.200.8.8 4.200" stroke="#567" /></svg></button>
        </div>
      </nav>

      <div class="toolbar">
        <div class="group"><span class="grip"></span>${this.tools(STANDARD)}</div>
        <div class="group"><span class="grip"></span>${this.tools(CHARTING)}</div>
        <div class="group">
          <span class="grip"></span>
          ${FRAMES.map(
            (name) => html`<button
              class=${classMap({ tool: true, period: true, on: this.frame === name })}
              @click=${() => (this.frame = name)}
            >${name}</button>`
          )}
        </div>
        <div class="tools-right">
          <button class="tool" aria-label="検索">${icon("search")}</button>
          <button class="tool" aria-label="チャット">${icon("chat")}</button>
        </div>
      </div>
      <div class="toolbar drawing">
        <div class="group"><span class="grip"></span>${this.tools(DRAWING)}</div>
      </div>

      <main class="workspace">
        <section class="panel main">
          <div class="plot">
            <svg viewBox="3 55 995 305" preserveAspectRatio="none" role="img" aria-label="GBPJPY H4">
              <path d=${cloudHatch} stroke="#8c8c8c" stroke-width=".9" stroke-dasharray="1.300 1" fill="none" />
              ${this.polyline(SPAN_A, "#b4b4b4", 0.8, "1.6 1.2")} ${this.polyline(SPAN_B, "#b4b4b4", 0.8, "1.6 1.2")}
              <line x1="3" x2="998" y1="172" y2="172" stroke="#59636e" stroke-width="1" />
              ${BANDS.map((band) => this.polyline(band, "#b0b0b0", 0.8))}
              ${CANDLES.map((_, i) => this.candle(i))}
              ${AVERAGES.map((average) => this.polyline(average.line, average.color, average.width))}
              ${SAR.map(([x, y]) => svg`<rect x=${x - 0.6} y=${y - 0.6} width="1.300" height="1.300" fill="#2cf02c"/>`)}
              <path d="M796 55h5l-2.500 2.500z" fill="#8fa3b3" />
            </svg>
            <div class="caption"><span class="caret"></span><span>GBPJPY,H4&nbsp; 143.220 143.259 143.155 143.227</span></div>
            <div class="countdown">
              <span>残り</span><span>3</span><span>時間</span><span>24</span><span>分</span><span>54</span><span>秒</span>
            </div>
          </div>
          <div class="axis">
            ${PRICES.map((price) => this.tick(price.toFixed(3), priceTop(price)))}
            ${this.tick("143.227", priceTop(143.227), true)}
          </div>
        </section>

        <section class="panel">
          <div class="plot">
            <svg viewBox="3 362 995 64" preserveAspectRatio="none" role="img" aria-label="RSI">
              ${this.level(381.5)} ${this.level(407)}
              ${RSI_BANDS.map((band) => this.polyline(band, "#b0b0b0", 0.8))} ${this.polyline(RSI, "#cc147c", 0.9)}
            </svg>
            <div class="caption">RSI(14) 64.3951&nbsp; =&gt;Bands(20) 57.8824</div>
          </div>
          <div class="axis">
            ${this.tick("100", 5)} ${this.tick("70", 30)} ${this.tick("30", 69)} ${this.tick("0", 92)}
          </div>
        </section>

        <section class="panel last">
          <div class="plot">
            <svg viewBox="3 428 995 91" preserveAspectRatio="none" role="img" aria-label="Stochastic">
              ${this.level(446.5)} ${this.level(501.5)}
              ${this.polyline(STOCH, "#cc147c", 1)} ${this.polyline(STOCH_SIGNAL, "#d0d000", 0.9, "1.6 1.6")}
            </svg>
            <div class="caption">Stoch(5,3,3) 78.5291 80.5719</div>
          </div>
          <div class="axis">
            ${this.tick("100", 4)} ${this.tick("80", 20)} ${this.tick("20", 80)} ${this.tick("0", 96)}
          </div>
        </section>

        <div class="dates">${DATES.map((date) => html`<span class="date">${date}</span>`)}</div>
      </main>
    `;
  }
}
